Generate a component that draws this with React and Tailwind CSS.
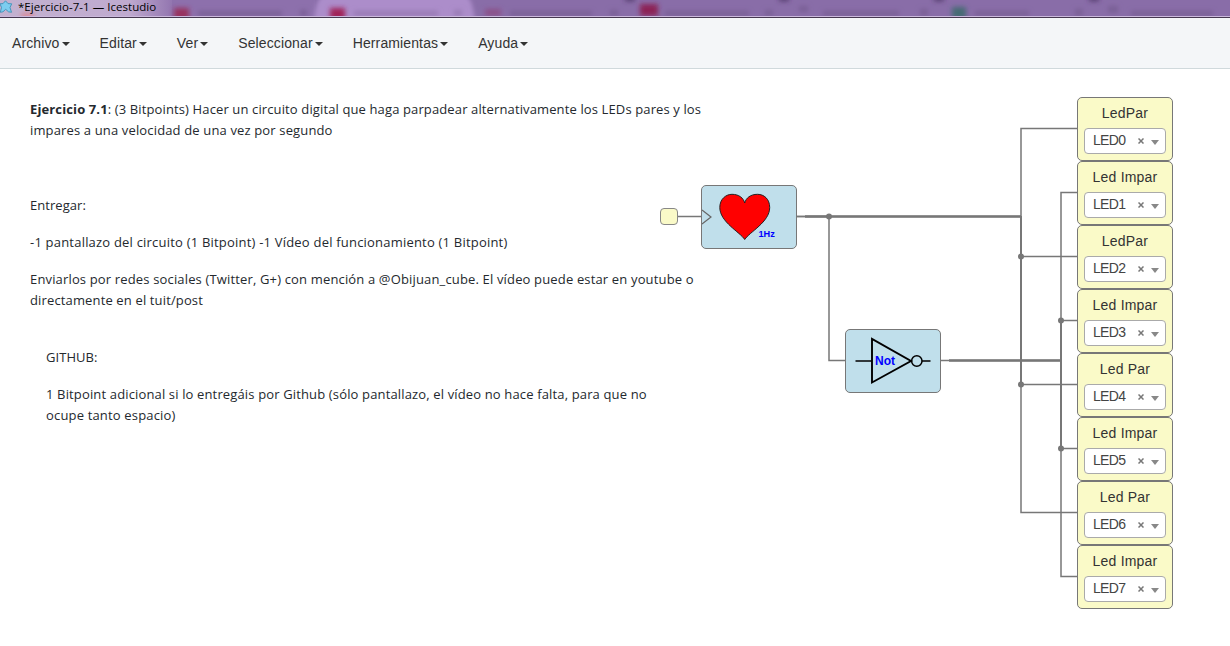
const leds = ['LedPar', 'Led Impar', 'LedPar', 'Led Impar', 'Led Par', 'Led Impar', 'Led Par', 'Led Impar'];

function GlassBackdrop() {
  return (
    <svg className="absolute inset-0 h-[17px] w-full" viewBox="0 0 1230 17">
      <defs>
        <filter id="soft" x="-10%" y="-50%" width="120%" height="200%"><feGaussianBlur stdDeviation="2.5" /></filter>
        <filter id="edge" x="-10%" y="-50%" width="120%" height="200%"><feGaussianBlur stdDeviation="2" /></filter>
        <linearGradient id="glow" x1="0" x2="1" y1="0" y2="0">
          <stop offset="0" stopColor="#c3b2d0" />
          <stop offset="0.75" stopColor="#bfaacf" />
          <stop offset="1" stopColor="#9376b0" />
        </linearGradient>
      </defs>
      <rect width="1230" height="17" fill="#896da8" />
      <rect x="160" width="155" height="17" fill="#8d70ac" />
      <rect width="172" height="17" fill="url(#glow)" />
      <path d="M314 22C315 5 318-5 328-5H462C471-5 473 5 475 22Z" fill="#ac8dca" filter="url(#edge)" />
      <g filter="url(#soft)">
        <path d="M21 13H34V19H21Z" fill="#d98998" />
        <path d="M174 8H189V20H174Z" fill="#98305f" />
        <path d="M330 8H345V20H330Z" fill="#a02458" />
        <path d="M640 4H658V16H640Z" fill="#8c2456" />
        <path d="M952 7H966V19H952Z" fill="#456a73" />
        <path d="M485 9H501V16H485Z" fill="#8b4f88" />
        <path d="M354 11H438V16H354ZM454 10H462V16H454Z" fill="#9779b3" />
        <path d="M198 11H282V16H198ZM300 10H307V16H300ZM510 11H592V16H510ZM610 10H618V16H610ZM665 11H749V16H665ZM765 10H773V16H765ZM799 6H808V12H799ZM823 11H899V16H823ZM920 9H928V16H920ZM975 11H1029V16H975ZM1075 9H1083V16H1075ZM1108 6H1118V13H1108ZM1131 11H1213V16H1131Z" fill="#795e95" />
        <path d="M625-3H635V1H625ZM779-3H789V1H779ZM934-3H944V1H934ZM1089-3H1099V1H1089Z" fill="#4d3565" />
      </g>
      <rect y="16" width="1230" height="1" fill="#cbb9dc" />
    </svg>
  );
}

function TitleBar() {
  return (
    <header className="relative flex h-[18px] shrink-0 items-start overflow-hidden border-b border-[#463850]">
      <GlassBackdrop />
      <svg className="relative h-[13px] w-[13px] shrink-0" viewBox="0 0 13 13">
        <path d="M0 3.800 3 3.600 5.500.8 8 3.600 11.700 3.800 10 7.500 11.500 12.300 8.500 11.800 5.700 9.300 3 11.800.3 12.300 1.500 7.500Z" fill="#7ccdf0" stroke="#3f91b8" strokeWidth="0.900" />
      </svg>
      <span className="relative ml-[5px] whitespace-nowrap font-['Open_Sans',sans-serif] text-[11.5px] leading-[13px] tracking-[0.04px] text-black">*Ejercicio-7-1 — Icestudio</span>
    </header>
  );
}

function Menu({ label }) {
  return (
    <div className="flex shrink-0 items-center gap-[2px]">
      <span>{label}</span>
      <svg className="mt-[2px] h-1 w-2" viewBox="0 0 8 4"><path d="M0 0H8L4 4Z" fill="#333" /></svg>
    </div>
  );
}

function Led({ name, n }) {
  return (
    <div className="flex h-16 flex-col items-center rounded-[5px] border border-[#777] bg-[#fafac8] pt-[5px] text-[14px] text-[#333]">
      <div className="h-[21px] leading-[21px] tracking-[0.2px]">{name}</div>
      <div className="mt-1 flex h-[26px] w-[82px] items-center rounded border border-[#aaa] bg-white pl-2">
        <span className="w-[45px] pb-[2px] leading-5 tracking-[-0.7px] text-[#444]">LED{n}</span>
        <svg className="h-[6px] w-[6px]" viewBox="0 0 6 6"><path d="M.5.5 5.500 5.500M5.500.5.5 5.500" stroke="#777" strokeWidth="1.500" /></svg>
        <svg className="ml-[7px] mt-[3px] h-[5px] w-2" viewBox="0 0 8 5"><path d="M0 0H8L4 5Z" fill="#888" /></svg>
      </div>
    </div>
  );
}

function Wires() {
  return (
    <svg className="absolute inset-0 h-full w-full" viewBox="0 69 1230 577" fill="none" stroke="#777">
      <g strokeWidth="1.5">
        <path d="M678 216.500H701" />
        <path d="M797 216.500H829V360.500H845" />
        <path d="M797 216.500H1021V128.500H1077M1021 216V512.500H1077M1021 256.500H1077M1021 384.500H1077" />
        <path d="M941 360.500H1061V192.500H1077M1061 360V576.500H1077M1061 320.500H1077M1061 448.500H1077" />
      </g>
      <path d="M805 216.500H1021M949 360.500H1061" strokeWidth="2.5" />
      <path d="M1021 216V385M1061 320V449" strokeWidth="2" />
      <g fill="#777" stroke="none">
        <circle cx="829" cy="216.500" r="3" />
        <circle cx="1021" cy="256.500" r="3" />
        <circle cx="1021" cy="384.500" r="3" />
        <circle cx="1061" cy="320.500" r="3" />
        <circle cx="1061" cy="448.500" r="3" />
      </g>
    </svg>
  );
}

function Line({ children, className = '' }) {
  return <span className={`block w-max whitespace-nowrap ${className}`}>{children}</span>;
}

export default function App() {
  return (
    <div className="flex h-[646px] w-[1230px] flex-col overflow-hidden bg-white font-['Liberation_Sans',Arial,sans-serif]">
      <TitleBar />
      <nav className="flex h-[51px] shrink-0 items-center gap-[30px] border-b border-[#d0d9dc] bg-[#f4f6f8] pl-3 text-[14px] leading-5 tracking-[0.12px] text-[#333]">
        <Menu label="Archivo" />
        <Menu label="Editar" />
        <Menu label="Ver" />
        <Menu label="Seleccionar" />
        <Menu label="Herramientas" />
        <Menu label="Ayuda" />
      </nav>
      <main className="relative flex-1">
        <Wires />
        <article className="relative w-[690px] pl-[30px] pt-[30px] font-['Open_Sans',sans-serif] text-[13px] leading-[21px] text-[#24292e]">
          <p>
            <Line className="tracking-[0.125px]"><b>Ejercicio 7.1</b>: (3 Bitpoints) Hacer un circuito digital que haga parpadear alternativamente los LEDs pares y los</Line>
            <Line className="tracking-[0.145px]">impares a una velocidad de una vez por segundo</Line>
          </p>
          <p className="mt-[54px]"><Line className="tracking-[0.05px]">Entregar:</Line></p>
          <p className="mt-4"><Line className="tracking-[0.205px]">-1 pantallazo del circuito (1 Bitpoint) -1 Vídeo del funcionamiento (1 Bitpoint)</Line></p>
          <p className="mt-4">
            <Line className="tracking-[0.155px]">Enviarlos por redes sociales (Twitter, G+) con mención a @Obijuan_cube. El vídeo puede estar en youtube o</Line>
            <Line className="tracking-[0.14px]">directamente en el tuit/post</Line>
          </p>
          <div className="mt-9 pl-4">
            <p><Line className="tracking-[0.05px]">GITHUB:</Line></p>
            <p className="mt-4">
              <Line className="tracking-[0.145px]">1 Bitpoint adicional si lo entregáis por Github (sólo pantallazo, el vídeo no hace falta, para que no</Line>
              <Line className="tracking-[0.17px]">ocupe tanto espacio)</Line>
            </p>
          </div>
        </article>
        <div className="absolute left-[660px] top-[139px] h-[17px] w-[18px] rounded-[4px] border border-[#888] bg-[#fafac8]" />
        <div className="absolute left-[701px] top-[116px] h-16 w-24 rounded-[5px] border border-[#777] bg-[#c0dfeb]">
          <svg className="h-full w-full" viewBox="702 186 94 62">
            <path d="M702 210 711 217 702 224" fill="none" stroke="#666" strokeWidth="1.200" />
            <path d="M744.700 239.500C740 232 719.800 222 719.800 207.500C719.800 199 726 194.300 732 194.300C739 194.300 743.500 198 744.700 203C746 198 750.500 194.300 757.500 194.300C764 194.300 769.700 199 769.700 207.500C769.700 222 749.500 232 744.700 239.500Z" fill="#f00" stroke="#222" strokeWidth="1" />
            <text x="758.500" y="237" className="font-['Liberation_Sans'] text-[9.2px] font-bold" fill="#00f">1Hz</text>
          </svg>
        </div>
        <div className="absolute left-[845px] top-[260px] h-16 w-24 rounded-[5px] border border-[#777] bg-[#c0dfeb]">
          <svg className="h-full w-full" viewBox="846 330 94 62">
            <g fill="none" stroke="#000">
              <path d="M855.500 361H872M922 361H930.500" strokeWidth="1.300" />
              <path d="M872 339V382.500L911 361Z" strokeWidth="1.900" />
              <circle cx="916.800" cy="361" r="5.200" strokeWidth="1.500" />
            </g>
            <text x="875" y="365" className="font-['Liberation_Sans'] text-[12px] font-bold" fill="#00f">Not</text>
          </svg>
        </div>
        <div className="absolute left-[1077px] top-[28px] flex w-24 flex-col">
          {leds.map((name, i) => <Led key={i} name={name} n={i} />)}
        </div>
      </main>
    </div>
  );
}
